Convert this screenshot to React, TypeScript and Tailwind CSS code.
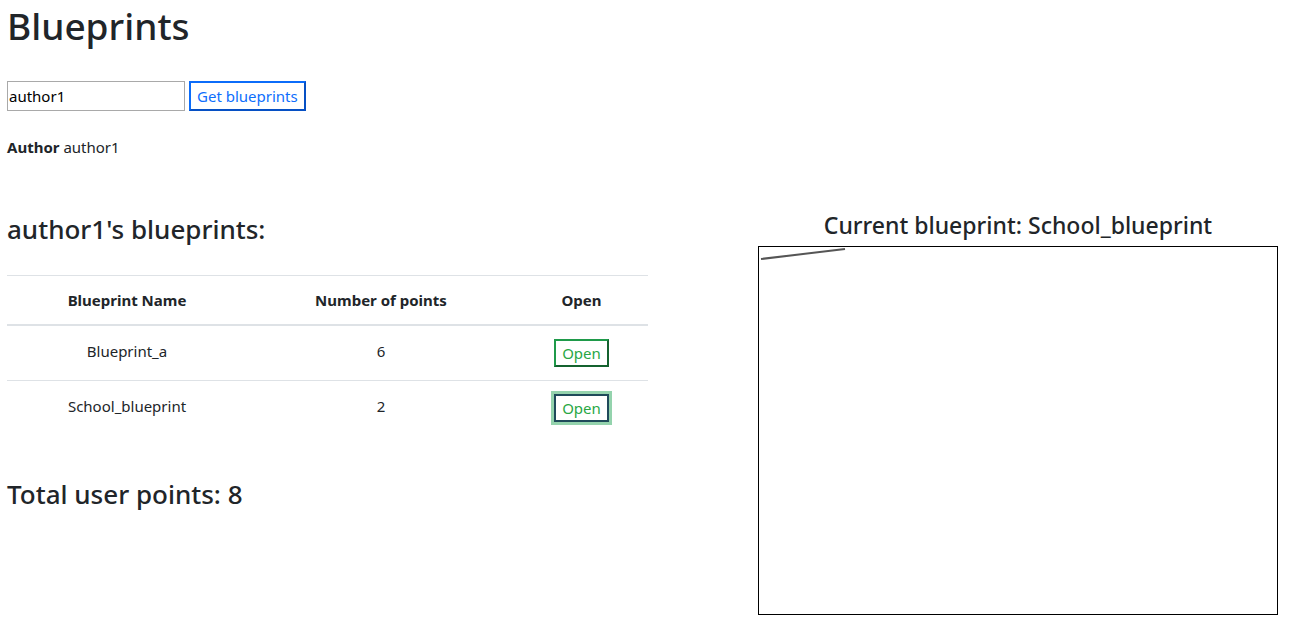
const blueprints = [
  { name: 'Blueprint_a', points: 6 },
  { name: 'School_blueprint', points: 2 },
];

export default function App() {
  const total = blueprints.reduce((s, b) => s + b.points, 0);

  return (
    <div className="min-h-[624px] bg-white px-[7px] text-[#212529] font-['Noto_Sans',sans-serif]">
      <h1 className="pt-[2px] text-[37px] font-medium leading-[48px]">Blueprints</h1>

      <div className="mt-[31px] flex items-center gap-[4px]">
        <input
          defaultValue="author1"
          className="h-[30px] w-[178px] border border-[#a9a9a9] px-[1px] text-[15px] text-black outline-none"
        />
        <button className="h-[30px] border-2 border-t-[#0b6cfa] border-l-[#0b6cfa] border-r-[#0650c4] border-b-[#0650c4] px-[6px] text-[15px] text-[#0d6efd]">
          Get blueprints
        </button>
      </div>

      <p className="mt-[25px] text-[15px]">
        <span className="font-bold">Author</span> author1
      </p>

      <div className="mt-[53px] flex">
        <div className="w-[641px]">
          <h3 className="text-[26px] font-medium leading-[34px]">author1's blueprints:</h3>

          <table className="mt-[29px] w-full border-t border-[#dee2e6] text-center text-[15px]">
            <thead>
              <tr className="h-[50px] border-b-2 border-[#dee2e6]">
                <th className="w-[240px] font-bold">Blueprint Name</th>
                <th className="w-[268px] font-bold">Number of points</th>
                <th className="font-bold">Open</th>
              </tr>
            </thead>
            <tbody>
              {blueprints.map((b, i) => (
                <tr key={b.name} className={i === 0 ? 'h-[55px] border-b border-[#dee2e6]' : 'h-[55px]'}>
                  <td className="pb-[4px]">{b.name}</td>
                  <td className="pb-[4px]">{b.points}</td>
                  <td>
                    <button
                      className={
                        i === 1
                          ? 'h-[28px] border-2 border-[#1f4a5a] px-[6px] text-[15px] text-[#28a745] shadow-[0_0_0_3px_#94d3ad]'
                          : 'h-[28px] border-2 border-t-[#1f9a4a] border-l-[#1f9a4a] border-r-[#14622f] border-b-[#14622f] px-[6px] text-[15px] text-[#28a745]'
                      }
                    >
                      Open
                    </button>
                  </td>
                </tr>
              ))}
            </tbody>
          </table>

          <h3 className="mt-[42px] text-[26px] font-medium leading-[34px]">Total user points: {total}</h3>
        </div>

        <div className="ml-[110px] flex w-[520px] flex-col items-center">
          <h4 className="-mt-px text-[23px] font-medium leading-[29px]">Current blueprint: School_blueprint</h4>
          <div className="mt-[6px] h-[369px] w-[520px] border border-black">
            <svg width="518" height="367" className="block">
              <line x1="2" y1="12" x2="86" y2="2" stroke="#555" strokeWidth="2" />
            </svg>
          </div>
        </div>
      </div>
    </div>
  );
}
